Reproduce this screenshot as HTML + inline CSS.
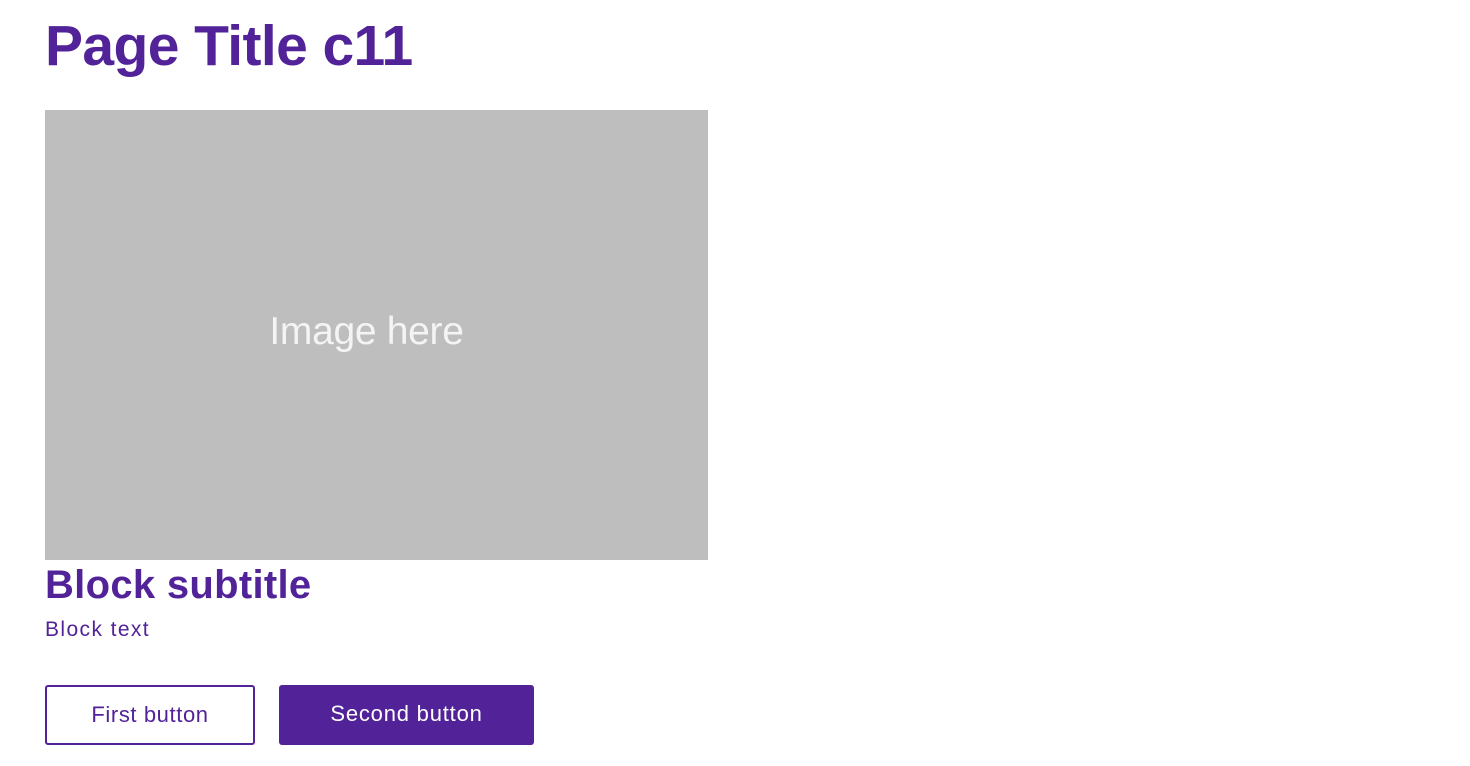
<!DOCTYPE html>
<html><head><style>
body{margin:0;background:#fff;font-family:"Liberation Sans",sans-serif;color:#522398;}
.t{position:absolute;left:45px;top:12px;font-size:57px;font-weight:bold;letter-spacing:-0.6px;line-height:68px;}
.img{position:absolute;left:45px;top:110px;width:663px;height:450px;background:#bebebe;}
.img span{position:absolute;left:0;right:0;top:198px;text-align:center;color:#f4f4f4;font-size:39px;line-height:48px;letter-spacing:-0.3px;padding-right:20px;}
.s{position:absolute;left:45px;top:561px;font-size:40px;font-weight:bold;letter-spacing:0.3px;line-height:48px;}
.bt{position:absolute;left:45px;top:615px;font-size:21px;line-height:30px;letter-spacing:1.4px;}
.b1{position:absolute;left:45px;top:685px;width:206px;height:56px;border:2px solid #522398;border-radius:3px;text-align:center;line-height:56px;font-size:22px;letter-spacing:0.6px;}
.b2{position:absolute;left:279px;top:685px;width:255px;height:60px;background:#522398;color:#fff;border-radius:3px;text-align:center;line-height:58px;font-size:22px;letter-spacing:0.8px;}
</style></head><body>
<div class="t">Page Title c11</div>
<div class="img"><span>Image here</span></div>
<div class="s">Block subtitle</div>
<div class="bt">Block text</div>
<div class="b1">First button</div>
<div class="b2">Second button</div>
</body></html>
